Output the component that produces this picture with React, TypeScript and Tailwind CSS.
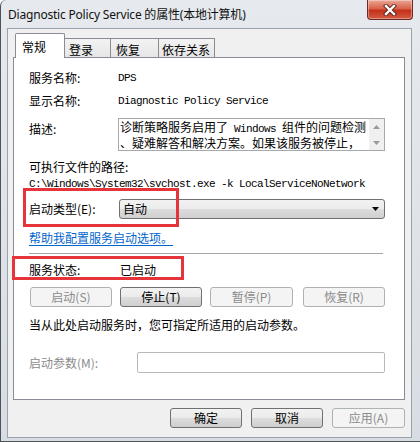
import React from "react";

const mono = "font-['Liberation_Mono','Noto_Sans_CJK_SC',monospace] text-[11px] tracking-[-0.6px]";

function WinButton({ label, disabled, w }: { label: string; disabled?: boolean; w: string }) {
  return (
    <div
      className={`${w} h-[20px] flex items-center justify-center rounded-[3px] border leading-[16px] ${
        disabled
          ? "border-[#adb2b5] bg-[#f4f4f4] text-[#8b8b8b]"
          : "border-[#707070] bg-[linear-gradient(#f2f2f2,#ebebeb_50%,#dddddd_50%,#cfcfcf)] text-black"
      }`}
    >
      {label}
    </div>
  );
}

function Tab({ label, active, w, pl }: { label: string; active?: boolean; w: string; pl: string }) {
  return (
    <div
      className={`${w} ${pl} flex items-center border border-b-0 border-[#898c95] leading-[16px] ${
        active
          ? "h-[25px] bg-white pt-[2px] rounded-t-[2px] relative z-10"
          : "h-[19px] mb-[1px] -ml-px pt-[3px] bg-[linear-gradient(#f3f3f3,#e6e6e6)]"
      }`}
    >
      {label}
    </div>
  );
}

function CloseButton() {
  return (
    <div className="mr-[7px] w-[46px] h-[20px] flex items-center justify-center rounded-b-[4px] border border-t-0 border-[#6d2a22] bg-[linear-gradient(#eaa896,#d9614a_45%,#c4321c_55%,#d35a40)] shadow-[inset_0_0_0_1px_rgba(255,255,255,0.35)]">
      <svg width="14" height="12" viewBox="0 0 14 12">
        <path d="M3 2 L11 10 M11 2 L3 10" stroke="#5a2219" strokeWidth="4.2" strokeLinecap="square" />
        <path d="M3 2 L11 10 M11 2 L3 10" stroke="#ffffff" strokeWidth="2.4" strokeLinecap="square" />
      </svg>
    </div>
  );
}

export default function App() {
  return (
    <div className="relative w-[420px] h-[442px] overflow-hidden rounded-tl-[6px] border-l border-b border-[#4e5358] bg-[linear-gradient(180deg,#e6eaee,#d8dde3)] font-['Noto_Sans_CJK_SC',sans-serif] text-[12px] text-black">
      {/* title bar */}
      <div className="flex h-[28px] items-start justify-between">
        <div className="pl-[7px] pt-[6px] leading-[18px] text-[12px] text-[#111] font-['Noto_Sans','Noto_Sans_CJK_SC',sans-serif] tracking-[-0.2px]">
          Diagnostic Policy Service 的属性(本地计算机)
        </div>
        <CloseButton />
      </div>

      {/* client area */}
      <div className="ml-[6px] w-[405px] h-[410px] border border-[#9aa3ad] bg-[#f0f0f0]">
        <div className="ml-[5px] w-[392px] mt-[4px]">
          {/* tabs */}
          <div className="relative z-10 flex items-end h-[25px] -mb-px pl-[2px]">
            <Tab label="常规" active w="w-[50px]" pl="pl-[6px]" />
            <Tab label="登录" w="w-[47px]" pl="pl-[4px]" />
            <Tab label="恢复" w="w-[49px]" pl="pl-[5px]" />
            <Tab label="依存关系" w="w-[57px]" pl="pl-[3px]" />
          </div>

          {/* panel */}
          <div className="h-[343px] border border-[#898c95] bg-white pl-[15px] leading-[16px]">
            <div className="mt-[10px] h-[20px] flex items-center">
              <div className="w-[89px]">服务名称:</div>
              <div className={mono}>DPS</div>
            </div>
            <div className="mt-[3px] h-[20px] flex items-center">
              <div className="w-[89px]">显示名称:</div>
              <div className={mono}>Diagnostic Policy Service</div>
            </div>
            <div className="mt-[7px] flex">
              <div className="w-[89px] mt-[3px]">描述:</div>
              <div className="w-[267px] h-[33px] flex border border-[#a5a9ae] bg-white">
                <div className="flex-1 pl-[1px] pt-[1px] leading-[13px] whitespace-nowrap overflow-hidden">
                  <div>
                    诊断策略服务启用了<span className={mono}> Windows </span>组件的问题检测
                  </div>
                  <div>、疑难解答和解决方案。如果该服务被停止，</div>
                </div>
                <div className="w-[15px] flex flex-col bg-[#f0f0f0]">
                  <div className="h-[16px] flex items-center justify-center">
                    <svg width="7" height="4" viewBox="0 0 7 4">
                      <path d="M0 4 L3.5 0 L7 4 Z" fill="#9a9a9a" />
                    </svg>
                  </div>
                  <div className="h-[15px] flex items-center justify-center">
                    <svg width="7" height="4" viewBox="0 0 7 4">
                      <path d="M0 0 L7 0 L3.5 4 Z" fill="#9a9a9a" />
                    </svg>
                  </div>
                </div>
              </div>
            </div>
            <div className="mt-[8px] h-[16px]">可执行文件的路径:</div>
            <div className={`mt-[1px] h-[16px] leading-[16px] ${mono}`}>
              C:\Windows\System32\svchost.exe -k LocalServiceNoNetwork
            </div>
            <div className="mt-[7px] h-[20px] flex items-center">
              <div className="w-[90px]">启动类型(E):</div>
              <div className="w-[266px] h-[20px] flex items-center justify-between rounded-[3px] border border-[#707070] bg-[linear-gradient(#f2f2f2,#ebebeb_50%,#dddddd_50%,#cfcfcf)] pl-[3px] pr-[5px]">
                <span>自动</span>
                <svg width="7" height="4" viewBox="0 0 7 4">
                  <path d="M0 0 L7 0 L3.5 4 Z" fill="#000" />
                </svg>
              </div>
            </div>
            <div className="mt-[11px] h-[16px] text-[#0066cc] underline underline-offset-2">
              帮助我配置服务启动选项。
            </div>
            <div className="mt-[7px] w-[354px] h-px bg-[#a7a7a7]" />
            <div className="mt-[8px] h-[16px] flex items-center">
              <div className="w-[91px]">服务状态:</div>
              <div>已启动</div>
            </div>
            <div className="mt-[9px] ml-[1px] flex">
              <WinButton label="启动(S)" disabled w="w-[82px]" />
              <div className="ml-[8px]">
                <WinButton label="停止(T)" w="w-[82px]" />
              </div>
              <div className="ml-[8px]">
                <WinButton label="暂停(P)" disabled w="w-[83px]" />
              </div>
              <div className="ml-[10px]">
                <WinButton label="恢复(R)" disabled w="w-[82px]" />
              </div>
            </div>
            <div className="mt-[10px] h-[16px]">当从此处启动服务时，您可指定所适用的启动参数。</div>
            <div className="mt-[19px] h-[21px] flex items-center">
              <div className="w-[108px] text-[#8b8b8b]">启动参数(M):</div>
              <div className="w-[248px] h-[21px] rounded-[2px] border border-[#b5b9bd] bg-white" />
            </div>
          </div>

          {/* dialog buttons */}
          <div className="mt-[8px] flex justify-end gap-[9px] pr-[-1px]">
            <WinButton label="确定" w="w-[72px]" />
            <WinButton label="取消" w="w-[72px]" />
            <WinButton label="应用(A)" disabled w="w-[73px]" />
          </div>
        </div>
      </div>

      {/* red highlight boxes */}
      <div className="absolute left-[22px] top-[188px] w-[156px] h-[39px] border-[3px] border-[#e5343a]" />
      <div className="absolute left-[11px] top-[256px] w-[172px] h-[24px] border-[3px] border-[#e5343a]" />
    </div>
  );
}
